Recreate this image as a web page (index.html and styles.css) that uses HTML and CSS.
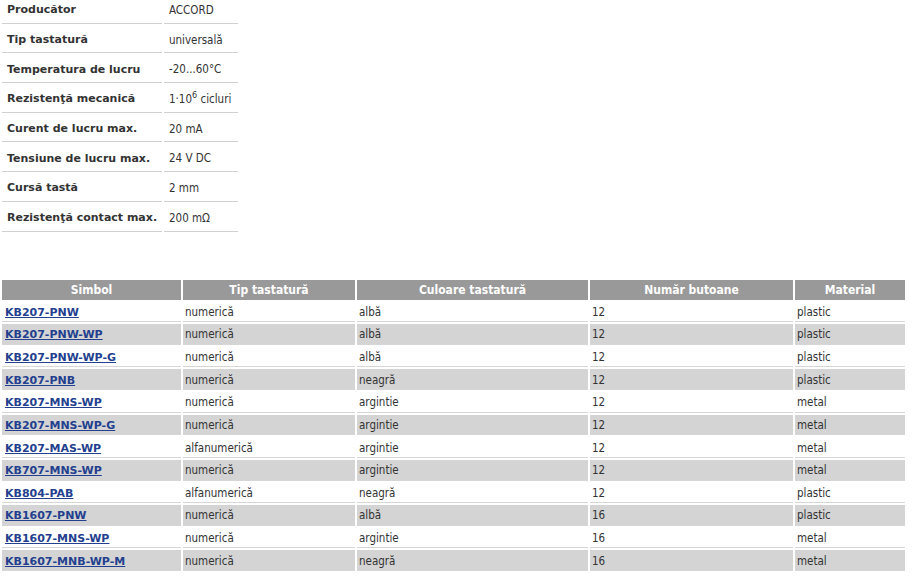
FILE: index.html
```html
<!DOCTYPE html>
<html>
<head>
<meta charset="utf-8">
<link rel="stylesheet" href="styles.css">
</head>
<body>
<table class="params">
<colgroup><col class="pc1"><col class="pc2"></colgroup>
<tr><td class="lbl">Producător</td><td class="val">ACCORD</td></tr>
<tr><td class="lbl">Tip tastatură</td><td class="val">universală</td></tr>
<tr><td class="lbl">Temperatura de lucru</td><td class="val">-20...60°C</td></tr>
<tr><td class="lbl">Rezistenţă mecanică</td><td class="val">1·10<sup>6</sup> cicluri</td></tr>
<tr><td class="lbl">Curent de lucru max.</td><td class="val">20 mA</td></tr>
<tr><td class="lbl">Tensiune de lucru max.</td><td class="val">24 V DC</td></tr>
<tr><td class="lbl">Cursă tastă</td><td class="val">2 mm</td></tr>
<tr><td class="lbl">Rezistenţă contact max.</td><td class="val">200 mΩ</td></tr>
</table>
<table class="products">
<thead>
<tr><th class="c1">Simbol</th><th class="c2">Tip tastatură</th><th class="c3">Culoare tastatură</th><th class="c4">Număr butoane</th><th class="c5">Material</th></tr>
</thead>
<tbody>
<tr><td><a href="#">KB207-PNW</a></td><td>numerică</td><td>albă</td><td>12</td><td>plastic</td></tr>
<tr class="alt"><td><a href="#">KB207-PNW-WP</a></td><td>numerică</td><td>albă</td><td>12</td><td>plastic</td></tr>
<tr><td><a href="#">KB207-PNW-WP-G</a></td><td>numerică</td><td>albă</td><td>12</td><td>plastic</td></tr>
<tr class="alt"><td><a href="#">KB207-PNB</a></td><td>numerică</td><td>neagră</td><td>12</td><td>plastic</td></tr>
<tr><td><a href="#">KB207-MNS-WP</a></td><td>numerică</td><td>argintie</td><td>12</td><td>metal</td></tr>
<tr class="alt"><td><a href="#">KB207-MNS-WP-G</a></td><td>numerică</td><td>argintie</td><td>12</td><td>metal</td></tr>
<tr><td><a href="#">KB207-MAS-WP</a></td><td>alfanumerică</td><td>argintie</td><td>12</td><td>metal</td></tr>
<tr class="alt"><td><a href="#">KB707-MNS-WP</a></td><td>numerică</td><td>argintie</td><td>12</td><td>metal</td></tr>
<tr><td><a href="#">KB804-PAB</a></td><td>alfanumerică</td><td>neagră</td><td>12</td><td>plastic</td></tr>
<tr class="alt"><td><a href="#">KB1607-PNW</a></td><td>numerică</td><td>albă</td><td>16</td><td>plastic</td></tr>
<tr><td><a href="#">KB1607-MNS-WP</a></td><td>numerică</td><td>argintie</td><td>16</td><td>metal</td></tr>
<tr class="alt"><td><a href="#">KB1607-MNB-WP-M</a></td><td>numerică</td><td>neagră</td><td>16</td><td>metal</td></tr>
</tbody>
</table>
</body>
</html>
```
FILE: styles.css
```css
html, body {
  margin: 0;
  padding: 0;
  background: #fff;
}
body {
  font-family: "DejaVu Sans Condensed", "DejaVu Sans", sans-serif;
  font-size: 11.5px;
  color: #333;
}
table {
  border-collapse: separate;
  border-spacing: 2px;
}
.params {
  margin-top: -6px;
  width: 240px;
  table-layout: fixed;
}
.pc1 { width: 160px; }
.pc2 { width: 74px; }
.params td {
  height: 27.7px;
  box-sizing: border-box;
  padding: 1px 5px 0;
  border-bottom: 1px solid #d0d0d0;
  vertical-align: middle;
  white-space: nowrap;
}
.params .lbl {
  font-family: "DejaVu Sans", sans-serif;
  font-size: 11px;
  font-weight: bold;
}
.params sup {
  font-size: 9px;
  line-height: 0;
}
.products {
  margin-top: 44px;
  width: 907px;
}
.products th {
  background: #999;
  color: #fff;
  font-weight: bold;
  font-size: 12px;
  height: 20px;
  box-sizing: border-box;
  padding: 0;
  text-align: center;
}
.products .c1 { width: 179px; }
.products .c2 { width: 172px; }
.products .c3 { width: 231px; }
.products .c4 { width: 203px; }
.products .c5 { width: 110px; }
.products td {
  height: 20.64px;
  box-sizing: border-box;
  padding: 1px 2px 0;
  border-bottom: 1px solid #d6d6d6;
  white-space: nowrap;
}
.products tr.alt td {
  background: #d4d4d4;
}
.products a {
  font-family: "DejaVu Sans", sans-serif;
  font-size: 11px;
  color: #233f8e;
  font-weight: bold;
  text-decoration: underline;
  padding-left: 1px;
}
```
